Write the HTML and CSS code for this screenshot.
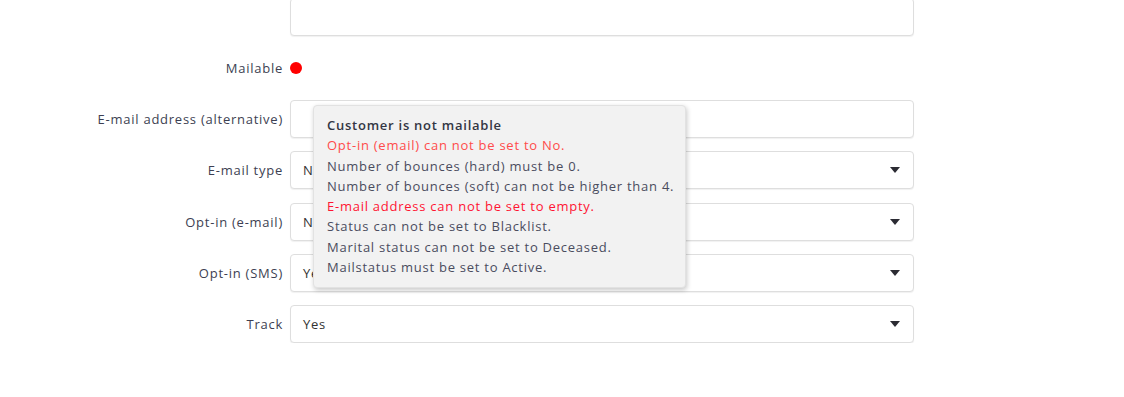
FILE: index.html
```html
<!DOCTYPE html>
<html lang="en">
<head>
  <meta charset="UTF-8" />
  <meta name="viewport" content="width=device-width, initial-scale=1.0" />
  <title>Customer</title>
  <link rel="stylesheet" href="styles.css">
</head>
<body>
  <form class="form">
    <label class="label"></label>
    <input type="text" class="field" />

    <label class="label">Mailable</label>
    <div class="status"><span class="dot"></span></div>

    <label class="label">E-mail address (alternative)</label>
    <input type="text" class="field" />

    <label class="label">E-mail type</label>
    <div class="select"><span>None</span><span class="caret"></span></div>

    <label class="label">Opt-in (e-mail)</label>
    <div class="select"><span>No</span><span class="caret"></span></div>

    <label class="label">Opt-in (SMS)</label>
    <div class="select"><span>Yes</span><span class="caret"></span></div>

    <label class="label">Track</label>
    <div class="select"><span>Yes</span><span class="caret"></span></div>

    <div class="tooltip">
      <div class="tip-title">Customer is not mailable</div>
      <div class="tip-line warn">Opt-in (email) can not be set to No.</div>
      <div class="tip-line">Number of bounces (hard) must be 0.</div>
      <div class="tip-line">Number of bounces (soft) can not be higher than 4.</div>
      <div class="tip-line error">E-mail address can not be set to empty.</div>
      <div class="tip-line">Status can not be set to Blacklist.</div>
      <div class="tip-line">Marital status can not be set to Deceased.</div>
      <div class="tip-line">Mailstatus must be set to Active.</div>
    </div>
  </form>
</body>
</html>
```

FILE: styles.css
```css
body {
  margin: 0;
  background-color: #fff;
  font-family: 'Open Sans', 'Liberation Sans', sans-serif;
  font-size: 13px;
  letter-spacing: 0.75px;
  color: #3d3f52;
}
.form {
  position: relative;
  display: grid;
  grid-template-columns: 283px 624px;
  column-gap: 7px;
  row-gap: 13.25px;
  margin-top: -2.5px;
}
.label {
  display: flex;
  align-items: center;
  justify-content: flex-end;
  height: 38px;
  white-space: nowrap;
  color: #3d3f52;
}
.field, .select {
  box-sizing: border-box;
  height: 38px;
  border: 1px solid #dedede;
  border-radius: 4px;
  background-color: #fff;
  box-shadow: 0 1px 1px rgba(0, 0, 0, 0.06);
  font: inherit;
  margin: 0;
}
.select {
  display: flex;
  align-items: center;
  justify-content: space-between;
  padding: 0 13px 0 12px;
  color: #333;
}
.caret {
  width: 0;
  height: 0;
  border-left: 5px solid transparent;
  border-right: 5px solid transparent;
  border-top: 6px solid #2b2b33;
}
.status {
  display: flex;
  align-items: center;
  height: 38px;
}
.dot {
  width: 12px;
  height: 12px;
  border-radius: 50%;
  background-color: #f00;
}
.tooltip {
  position: absolute;
  left: 313px;
  top: 107.5px;
  box-sizing: border-box;
  width: 373px;
  padding: 9px 13px 10px;
  background-color: #f2f2f2;
  border: 1px solid #e2e2e2;
  border-radius: 4px;
  box-shadow: 1px 2px 5px rgba(0, 0, 0, 0.22);
  line-height: 20.25px;
  white-space: nowrap;
  color: #4a4c5e;
}
.tip-title {
  font-weight: 600;
  color: #333644;
}
.warn {
  color: #ff4b4b;
}
.error {
  color: #ff1432;
}
```
